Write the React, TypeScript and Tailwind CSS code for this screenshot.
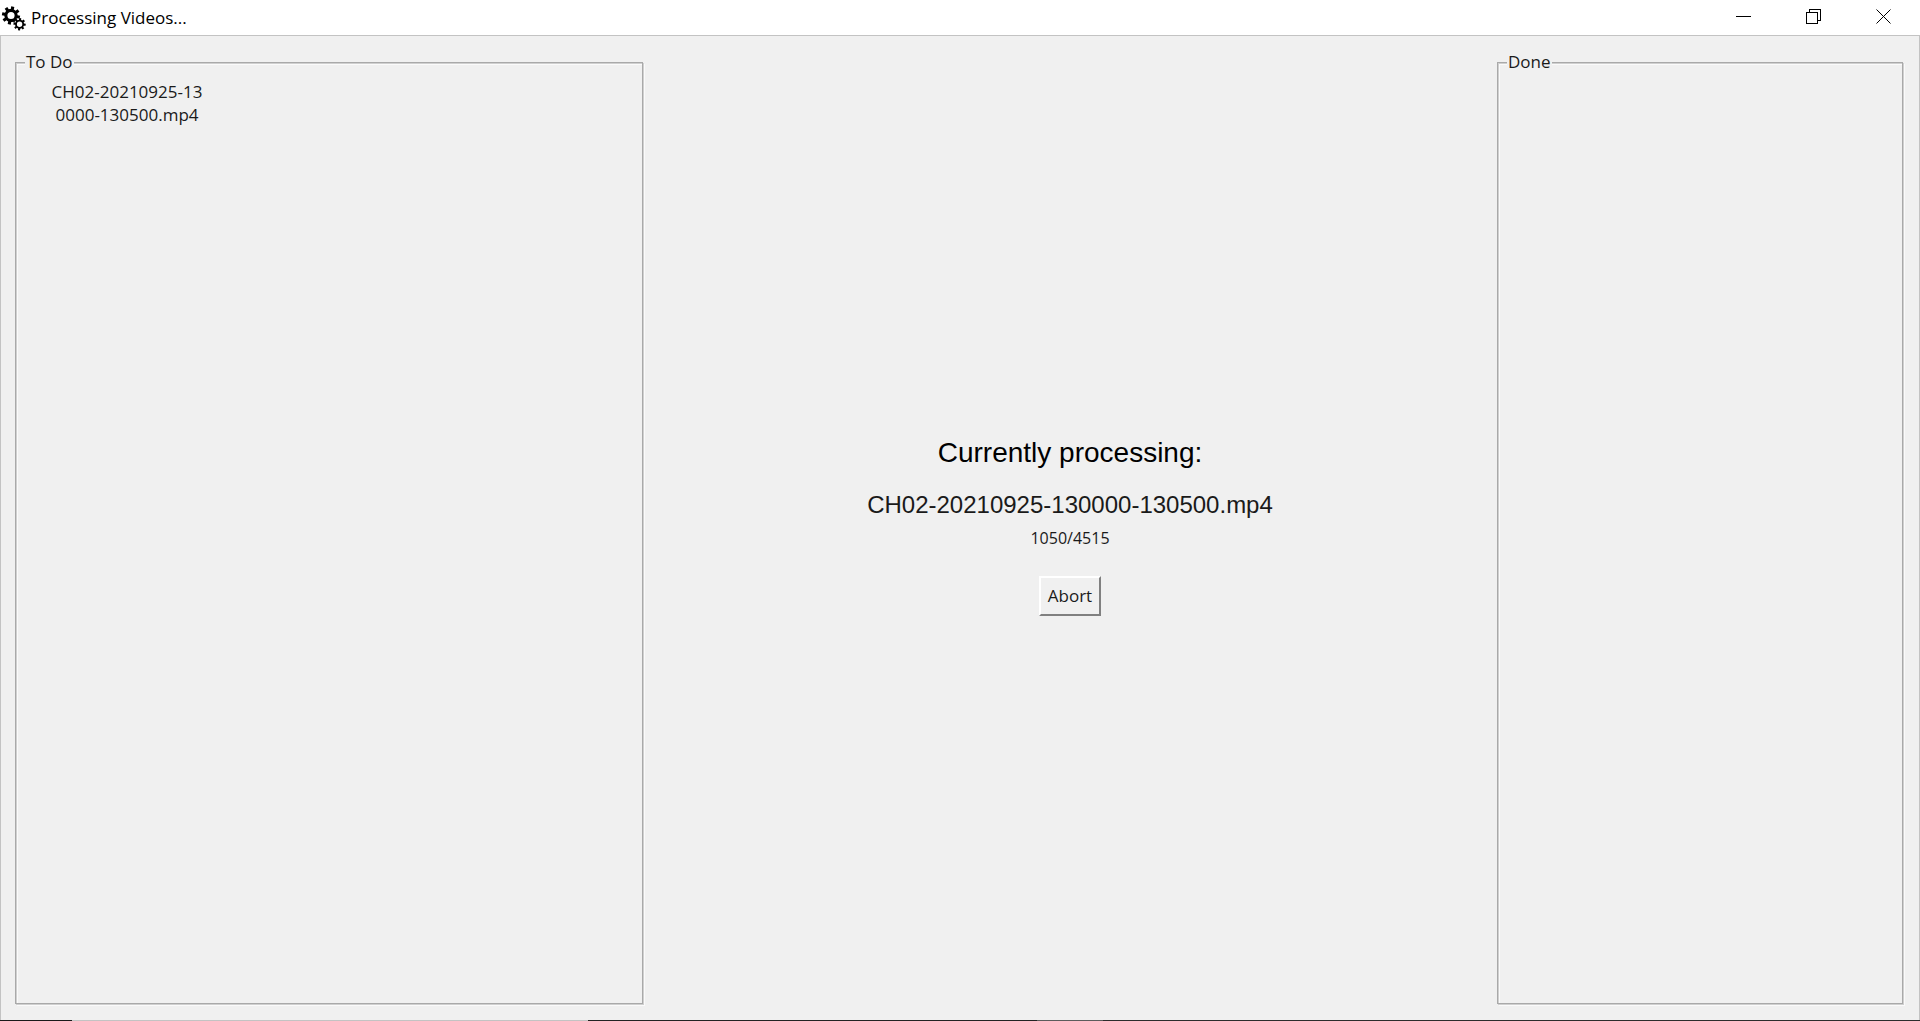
import React from "react";

const queue = [["CH02-20210925-13", "0000-130500.mp4"]];

function gear(cx: number, cy: number, outer: number, inner: number, hole: number, turn: number) {
  const points: string[] = [];
  const step = Math.PI / 4;
  for (let i = 0; i < 8; i++) {
    const a = turn + i * step;
    const corners: [number, number][] = [
      [inner, -0.5],
      [inner, -0.3],
      [outer, -0.22],
      [outer, 0.22],
      [inner, 0.3],
    ];
    for (const [r, t] of corners) {
      const angle = a + t * step;
      points.push(`${(cx + r * Math.cos(angle)).toFixed(2)} ${(cy + r * Math.sin(angle)).toFixed(2)}`);
    }
  }
  return `M${points.join("L")}ZM${cx - hole} ${cy}a${hole} ${hole} 0 1 0 ${2 * hole} 0a${hole} ${hole} 0 1 0 ${-2 * hole} 0Z`;
}

function GearsIcon() {
  return (
    <svg width="26" height="32" viewBox="0 0 26 32" aria-hidden="true" className="shrink-0">
      <path fillRule="evenodd" d={gear(11, 13.5, 9.2, 6.6, 3.6, 0.2)} />
      <circle cx="19.6" cy="22" r="5.4" fill="white" />
      <path fillRule="evenodd" d={gear(19.6, 22.2, 6.2, 4.5, 2.7, 0.1)} />
    </svg>
  );
}

function WindowButton({ label, children }: { label: string; children: React.ReactNode }) {
  return (
    <button type="button" aria-label={label} className="flex h-full w-[70px] items-center justify-center hover:bg-gray-200">
      <svg width="16" height="16" viewBox="0 0 16 16" fill="none" stroke="black" shapeRendering="crispEdges" aria-hidden="true">
        {children}
      </svg>
    </button>
  );
}

function Group({ title, children }: { title: string; children?: React.ReactNode }) {
  return (
    <fieldset className="min-w-0 border border-[#a9a9a9] pl-[9px] shadow-[inset_1px_1px_0_#cfcfcf,inset_2px_2px_0_#fafafa,1px_1px_0_#cfcfcf,2px_2px_0_#fafafa]">
      <legend className="bg-[#f0f0f0] px-px text-[17px] leading-[22px]">{title}</legend>
      {children}
    </fieldset>
  );
}

export default function App() {
  return (
    <div className="flex min-h-screen flex-col bg-[#f0f0f0] font-['Open_Sans','Noto_Sans',sans-serif] text-[#1a1a1a]">
      <header className="flex h-[35px] items-center bg-white">
        <GearsIcon />
        <h1 className="pl-[5px] text-[17px] leading-6 text-black">Processing Videos...</h1>
        <div className="ml-auto flex h-8 self-start pr-px">
          <WindowButton label="Minimize">
            <path d="M0 8.5h15" />
          </WindowButton>
          <WindowButton label="Restore">
            <path d="M.5 4.5h11v11h-11zM3.5 4V1.5h11v11H12" />
          </WindowButton>
          <WindowButton label="Close">
            <path d="M.5 1.5l14 14M14.5 1.5l-14 14" shapeRendering="auto" />
          </WindowButton>
        </div>
      </header>

      <main className="grid flex-1 grid-cols-[628fr_854fr_406fr] border-x border-t border-[#c3c3c3] pt-[15px] pr-4 pb-4 pl-[14px]">
        <Group title="To Do">
          <ul className="w-[204px] pt-[3px] text-center text-[17px] leading-[23px]">
            {queue.map((lines) => (
              <li key={lines[0]} className="pt-1">
                {lines.map((line) => (
                  <div key={line}>{line}</div>
                ))}
              </li>
            ))}
          </ul>
        </Group>

        <section className="flex flex-col items-center justify-center pb-1">
          <h2 className="font-['Liberation_Sans',Arial,sans-serif] text-[28px] leading-9 text-black">Currently processing:</h2>
          <p className="mt-[18px] font-['Liberation_Sans',Arial,sans-serif] text-[24px] leading-8">CH02-20210925-130000-130500.mp4</p>
          <p className="mt-1.5 text-[16px] leading-[23px]">1050/4515</p>
          <button
            type="button"
            className="mt-[26px] h-10 border-2 border-t-white border-r-[#808080] border-b-[#808080] border-l-white px-[7px] text-[17px] leading-6"
          >
            Abort
          </button>
        </section>

        <Group title="Done" />
      </main>

      <div aria-hidden="true" className="flex h-px">
        <div className="w-[72px] bg-[#1a1a1a]" />
        <div className="w-[516px] bg-[#c3c3c3]" />
        <div className="w-[449px] bg-[#222222]" />
        <div className="w-[66px] bg-[#5c5c5c]" />
        <div className="flex-1 bg-[#2c2c2c]" />
      </div>
    </div>
  );
}
